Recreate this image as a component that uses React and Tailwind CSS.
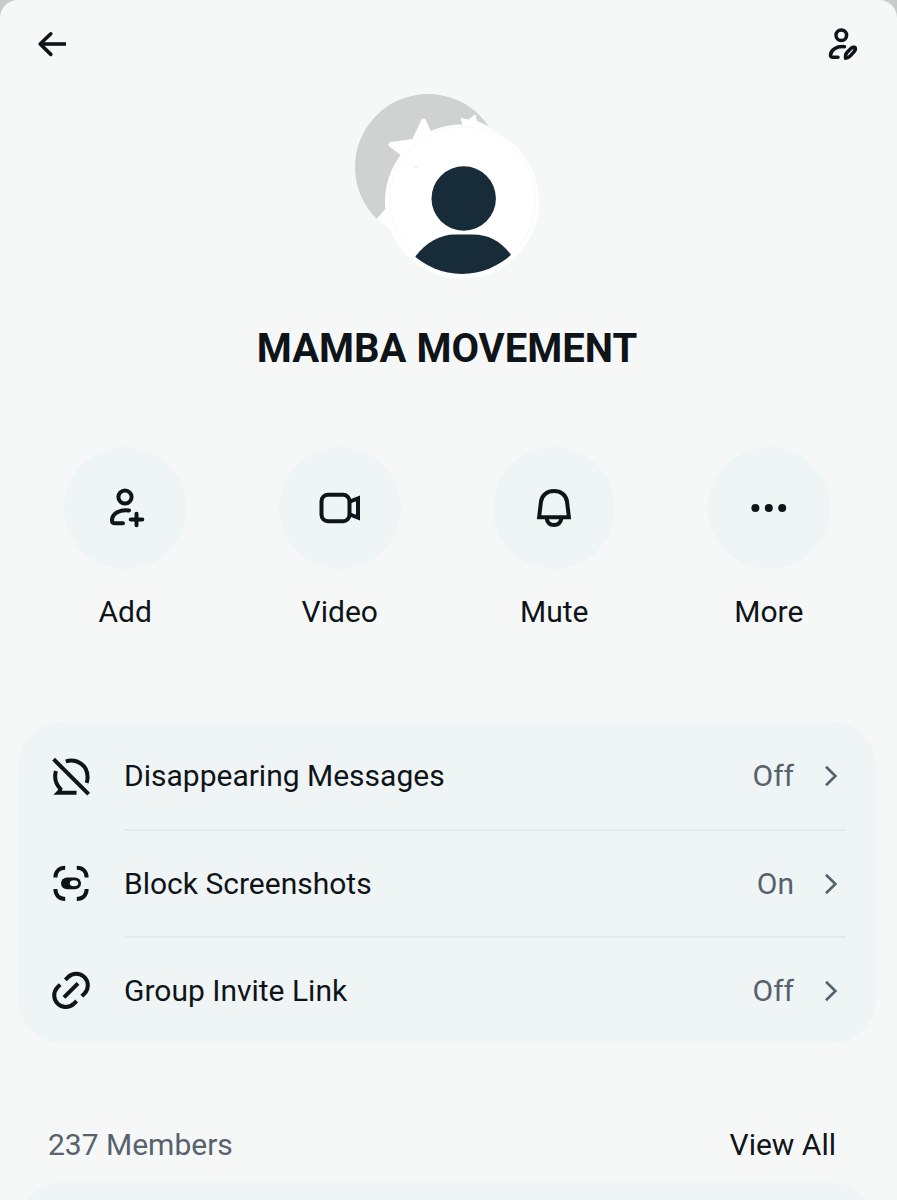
import React from "react";

const ACTIONS = [
    { label: "Add", icon: AddIcon },
    { label: "Video", icon: VideoIcon },
    { label: "Mute", icon: BellIcon },
    { label: "More", icon: DotsIcon },
];

const SETTINGS = [
    { label: "Disappearing Messages", value: "Off", icon: DisappearingIcon },
    { label: "Block Screenshots", value: "On", icon: ScreenshotIcon },
    { label: "Group Invite Link", value: "Off", icon: LinkIcon },
];

function BackIcon() {
    return (
        <svg width="32" height="32" viewBox="0 0 32 32" fill="none" stroke="currentColor" strokeWidth="3.6" aria-hidden="true">
            <path d="M30 16H4" />
            <path d="M14.8 5.8 4.2 16 14.8 26.4" strokeLinecap="round" strokeLinejoin="round" />
        </svg>
    );
}

function EditGroupIcon() {
    return (
        <svg width="32" height="32" viewBox="0 0 32 32" fill="none" stroke="currentColor" strokeWidth="3.5" strokeLinecap="round" strokeLinejoin="round" aria-hidden="true">
            <circle cx="14.3" cy="7.3" r="5.3" />
            <path d="M17.5 18.7C9 18 4 22 3.5 27Q3.3 29.3 6 29.3H11" />
            <path d="M18.6 30.2C18.2 27.4 18.6 25.8 20.2 24.2L23.4 21C25.2 19.2 27.6 18.8 28.1 19.5C28.7 20.6 28 22.8 26.5 24.4L23.6 27.6C22.1 29.2 20.6 30.2 18.6 30.2Z" />
        </svg>
    );
}

function AddIcon() {
    return (
        <svg width="48" height="48" viewBox="0 0 48 48" fill="none" stroke="currentColor" strokeWidth="4" strokeLinecap="round" aria-hidden="true">
            <circle cx="24" cy="13" r="6.6" />
            <path d="M28 26.4C18 25 11 30 11 36.5Q11 39.3 14 39.3H22" />
            <path d="M35.5 29.7V41.3M29.7 35.5H41.3" />
        </svg>
    );
}

function VideoIcon() {
    return (
        <svg width="48" height="48" viewBox="0 0 48 48" fill="none" stroke="currentColor" strokeWidth="4" aria-hidden="true">
            <rect x="5.5" y="10.7" width="28" height="26.5" rx="6.5" />
            <path d="M34 17.5 42 14.4V33.6L34 30.5" />
        </svg>
    );
}

function BellIcon() {
    return (
        <svg width="48" height="48" viewBox="0 0 48 48" fill="none" stroke="currentColor" strokeWidth="4" aria-hidden="true">
            <path d="M9.1 33.3 11 17.5C11.9 11 17.2 7 24 7S36.1 11 37 17.5L38.9 33.3Z" />
            <path d="M16.5 34C17.2 38.5 20 41 24 41S30.8 38.5 31.5 34" />
        </svg>
    );
}

function DotsIcon() {
    return (
        <svg width="48" height="48" viewBox="0 0 48 48" fill="currentColor" aria-hidden="true">
            <circle cx="10.4" cy="24" r="4" />
            <circle cx="23.8" cy="24" r="4" />
            <circle cx="37.2" cy="24" r="4" />
        </svg>
    );
}

function DisappearingIcon() {
    return (
        <svg width="40" height="40" viewBox="0 0 40 40" fill="none" stroke="currentColor" strokeWidth="4" aria-hidden="true">
            <path d="M2.6 3.2 37.6 38.2" />
            <path d="M14.8 5.3C26 2 36.6 9.4 36.6 20.9Q36.6 23.9 35.6 26.8" />
            <path d="M4.9 14.9C3 22.4 5 28.4 9.4 32.8Q9 34.9 7.2 36.7H25.5" />
        </svg>
    );
}

function ScreenshotIcon() {
    return (
        <svg width="40" height="40" viewBox="0 0 40 40" fill="none" stroke="currentColor" strokeWidth="4" aria-hidden="true">
            <path d="M4.4 14.6C4.4 8.6 8.2 4.8 14.2 4.8M25.8 4.8C31.8 4.8 35.6 8.6 35.6 14.6M35.6 26.1C35.6 32.1 31.8 35.9 25.8 35.9M14.2 35.9C8.2 35.9 4.4 32.1 4.4 26.1" />
            <rect x="10" y="14.4" width="20" height="11.8" rx="5.9" fill="currentColor" stroke="none" />
            <ellipse cx="23" cy="20.3" rx="4.2" ry="3" fill="#eff4f5" stroke="none" />
        </svg>
    );
}

function LinkIcon() {
    return (
        <svg width="40" height="40" viewBox="0 0 40 40" fill="none" stroke="currentColor" strokeWidth="4" aria-hidden="true">
            <path d="M13 27.4 27 13.4" />
            <path d="M14.4 9.8 17.2 7A11.6 11.6 0 0 1 33.6 23.4L30.8 26.2" />
            <path d="M25.6 31 22.8 33.8A11.6 11.6 0 0 1 6.4 17.4L9.2 14.6" />
        </svg>
    );
}

function ChevronIcon() {
    return (
        <svg width="14" height="24" viewBox="0 0 14 24" fill="none" stroke="currentColor" strokeWidth="2.6" aria-hidden="true">
            <path d="M2 2.8 11.4 12 2 21.2" />
        </svg>
    );
}

function GroupAvatar() {
    return (
        <svg className="mx-auto mt-[6px]" width="184" height="185" viewBox="0 0 184 185" role="img" aria-label="Group avatar">
            <defs>
                <clipPath id="back">
                    <circle cx="73" cy="73" r="73" />
                </clipPath>
                <clipPath id="front">
                    <circle cx="107" cy="108" r="72" />
                </clipPath>
            </defs>
            <circle cx="73" cy="73" r="73" fill="#d0d1d1" />
            <g fill="#fff" stroke="#fff" strokeLinejoin="round" clipPath="url(#back)">
                <path d="M68.5 27 77 45 56 66 36 50.5 59 47.5Z" strokeWidth="5" />
                <path d="M106 24.5 113.5 26 120 21 121.5 27 136 34V50H108V31Z" strokeWidth="1" />
                <path d="M31 115 21 126 40 145Z" strokeWidth="1" />
            </g>
            <circle cx="107" cy="107.5" r="77" fill="#fff" />
            <circle cx="107.5" cy="106" r="73" fill="none" stroke="#f8f9f9" />
            <circle cx="61" cy="73.5" r="0.8" fill="#dcdede" />
            <g fill="#172b39" clipPath="url(#front)">
                <circle cx="108.7" cy="104.5" r="32.2" />
                <path d="M58 166C68 150 84 140.5 100 140.5H118C134 140.5 148 148 158 164V185H58Z" />
            </g>
        </svg>
    );
}

const App = () => {
    return (
        <div className="bg-[#c9cbcb] font-[Roboto,'Liberation_Sans',sans-serif] text-[#0f1419]">
            <main className="flex min-h-screen flex-col rounded-t-[18px] bg-[#f6f8f8] pr-[21px] pl-[18px]">
                <header className="flex h-[88px] items-center justify-between pr-[17px] pl-[18px]">
                    <button type="button" aria-label="Back">
                        <BackIcon />
                    </button>
                    <button type="button" aria-label="Edit group">
                        <EditGroupIcon />
                    </button>
                </header>

                <GroupAvatar />

                <h1 className="mt-[46px] text-center text-[40px] leading-[48px] font-bold">
                    MAMBA MOVEMENT
                </h1>

                <div className="mt-[74px] grid grid-cols-4">
                    {ACTIONS.map(({ label, icon: Icon }) => (
                        <button
                            key={label}
                            type="button"
                            className="flex flex-col items-center gap-[23px]"
                        >
                            <span className="flex size-[122px] items-center justify-center rounded-full bg-[#eff4f5]">
                                <Icon />
                            </span>
                            <span className="text-[30px] leading-[40px]">{label}</span>
                        </button>
                    ))}
                </div>

                <ul className="mt-[90px] rounded-[44px] bg-[#eff4f5]">
                    {SETTINGS.map(({ label, value, icon: Icon }, index) => (
                        <li key={label}>
                            <button
                                type="button"
                                className="flex w-full items-center pl-[33px] text-left text-[30px] leading-[40px]"
                            >
                                <Icon />
                                <span
                                    className={`ml-[33px] mr-[30px] flex h-[107px] flex-1 items-center ${
                                        index > 0 ? "border-t-2 border-[#e4e9eb]" : ""
                                    }`}
                                >
                                    <span className="flex-1">{label}</span>
                                    <span className="mr-[30px] text-[#56626d]">{value}</span>
                                    <span className="mr-2 text-[#56626d]">
                                        <ChevronIcon />
                                    </span>
                                </span>
                            </button>
                        </li>
                    ))}
                </ul>

                <div className="mt-[82px] flex items-center justify-between pr-[40px] pl-[30px] text-[30px] leading-[40px]">
                    <h2 className="text-[#56626d]">237 Members</h2>
                    <a href="#members">View All</a>
                </div>

                {/* member list, runs off the bottom of the screen */}
                <div id="members" className="mt-[18px] min-h-0 flex-[1_1_0px] overflow-hidden">
                    <div className="h-[107px] rounded-[44px] bg-[#eff4f5]" />
                </div>
            </main>
        </div>
    );
};

export default App;
